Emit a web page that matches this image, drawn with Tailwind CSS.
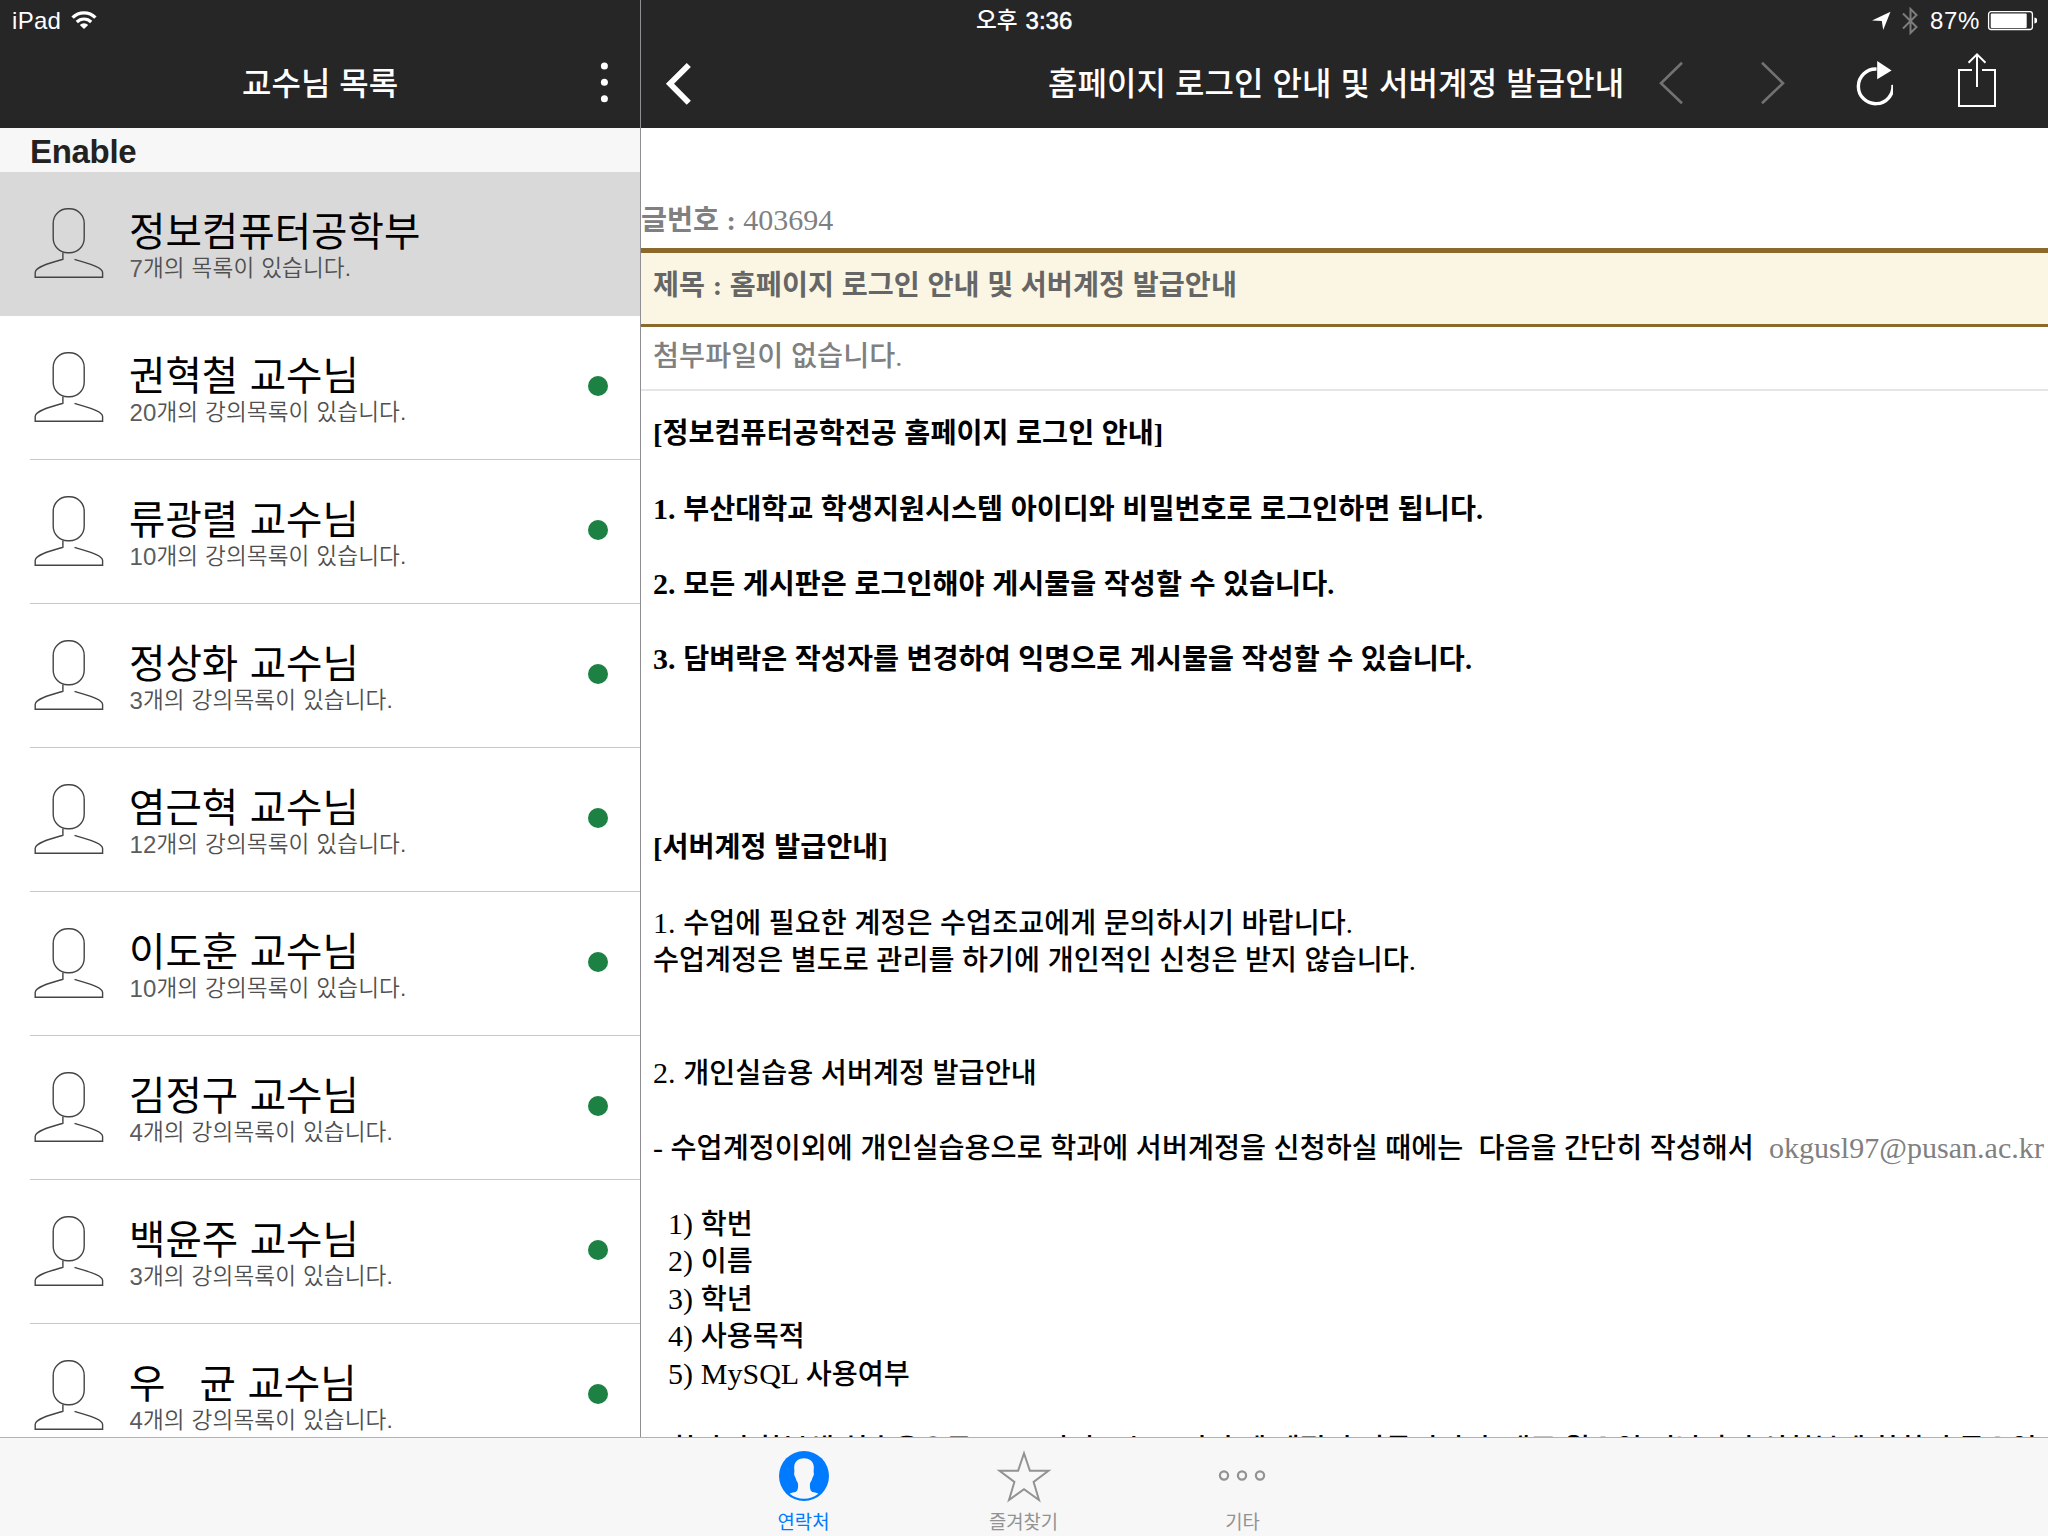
<!DOCTYPE html>
<html lang="ko">
<head>
<meta charset="utf-8">
<title>교수님 목록</title>
<script src="https://cdn.jsdelivr.net/npm/@tailwindcss/browser@4"></script>
</head>
<body class="bg-white">
<div class="flex h-[1536px] w-[2048px] flex-col overflow-hidden font-['Liberation_Sans','Noto_Sans_CJK_KR',sans-serif]">
  <div class="flex h-[1437px] overflow-hidden">

    <!-- Professor list -->
    <aside class="flex w-[640px] flex-none flex-col">
      <header class="h-32 flex-none bg-[#262626] text-white">
        <div class="flex h-10 items-start gap-[10px] pl-[12px] pt-[7px]">
          <span class="text-2xl leading-[27px] tracking-[0.3px]">iPad</span>
          <svg class="mt-[3px] h-[20px] w-[26px]" viewBox="0 0 26 20" fill="none" stroke="#fff">
            <path d="M1.6 7.6A16 16 0 0 1 24.4 7.6" stroke-width="3.4"/>
            <path d="M5.8 12A10.2 10.2 0 0 1 20.2 12" stroke-width="3.2"/>
            <path d="M13 19L8.8 14.9A6 6 0 0 1 17.2 14.9Z" fill="#fff" stroke="none"/>
          </svg>
        </div>
        <div class="flex h-[88px] items-start">
          <h1 class="ml-[242px] w-[349px] pt-6 text-[32px] leading-10 font-medium">교수님 목록</h1>
          <svg class="mt-[20px] h-11 w-7" viewBox="0 0 28 44" fill="#fff">
            <circle cx="13.4" cy="6" r="3.5"/><circle cx="13.4" cy="22.3" r="3.5"/><circle cx="13.4" cy="38.7" r="3.5"/>
          </svg>
        </div>
      </header>
      <h2 class="h-11 flex-none bg-[#f7f7f7] pl-[30px] pt-[5px] text-[33px] leading-[38px] font-bold tracking-[-0.3px] text-[#222]">Enable</h2>
      <ul id="list"></ul>
    </aside>

    <div class="w-px flex-none bg-[#8e8e93]"></div>

    <!-- Notice -->
    <main class="w-[1407px] flex-none">
      <header class="h-32 bg-[#262626] text-white">
        <div class="flex h-10 items-start pt-[7px]">
          <div class="flex w-[1230px] items-start pl-[335px] font-medium">
            <span class="text-[22.6px] leading-[27px]">오후</span><span class="pl-[8px] text-2xl leading-[27px] [-webkit-text-stroke:0.5px_#fff]">3:36</span>
          </div>
          <svg class="mt-[4px] h-5 w-5" viewBox="0 0 20 20" fill="#fff"><path d="M19.5 .8L1 9.6L10.8 9.9L12.2 19Z"/></svg>
          <svg class="ml-[10px] h-7 w-[18px]" viewBox="0 0 18 28" fill="none" stroke="#7d7d7d" stroke-width="2"><path d="M2 6.5L15.5 20L9.5 26V2L15.5 8L2 21.5"/></svg>
          <span class="ml-[11px] w-[55px] text-2xl leading-[27px] tracking-[0.7px]">87%</span>
          <svg class="mt-[3px] h-[22px] w-[52px]" viewBox="0 0 52 22"><rect x="3.6" y="1.7" width="43.8" height="17.8" rx="2.5" fill="none" stroke="#fff" stroke-width="1.3"/><rect x="5.7" y="3.4" width="36" height="14.6" rx="1" fill="#fff"/><path d="M49.4 7.5q3 .5 3 3t-3 3z" fill="#fff"/></svg>
        </div>
        <div class="flex h-[88px] items-start">
          <svg class="ml-[20px] mt-[20px] h-12 w-10" viewBox="0 0 40 48" fill="none" stroke="#fff" stroke-width="5.8"><path d="M27.8 5L9 23.7L27.8 42.8"/></svg>
          <div class="ml-[347px] w-[604px] pt-6 text-[32px] leading-10 font-medium tracking-[0.08px] whitespace-nowrap">홈페이지 로그인 안내 및 서버계정 발급안내</div>
          <svg class="mt-[18px] h-12 w-10" viewBox="0 0 40 48" fill="none" stroke="#727272" stroke-width="2.6"><path d="M30 4.8L9 25.2L30 45.2"/></svg>
          <svg class="ml-[60px] mt-[18px] h-12 w-10" viewBox="0 0 40 48" fill="none" stroke="#727272" stroke-width="2.6"><path d="M10 4.8L31 25.2L10 45.2"/></svg>
          <svg class="ml-[61px] mt-[18px] h-12 w-10" viewBox="0 0 40 48" fill="none"><path d="M24 10.3A17.3 17.3 0 1 0 40.3 26" stroke="#fff" stroke-width="3.4" transform="translate(-.4 .8)"/><path d="M24.2 3L38.6 12.4L24.2 21.2Z" fill="#fff"/></svg>
          <svg class="ml-[63px] mt-[12px] h-[58px] w-[42px]" viewBox="0 0 42 58" fill="none" stroke="#fff" stroke-width="2"><path d="M16 18H3V54H39V18H26M21 2.5V35M12.5 10.7L21 2.3L29.5 10.7"/></svg>
        </div>
      </header>

      <div class="font-['Liberation_Serif','Noto_Sans_CJK_KR',serif] text-[28.27px] leading-[37.63px] [word-spacing:0.4px]">
        <div class="flex h-[120px] items-start pt-[74px] whitespace-pre text-[#808080]"><b>글번호 : </b><span class="text-[30px] leading-[36.5px]">403694</span></div>
        <div class="h-[79px] border-t-[5px] border-b-[3px] border-[#8a692b] bg-[#faf6e3] pl-[12px] pt-[14px] font-bold tracking-[0.08px] text-[#666]">제목 : 홈페이지 로그인 안내 및 서버계정 발급안내</div>
        <div class="h-[64px] border-b-2 border-[#e5e5e5] pl-[12px] pt-[11px] font-medium tracking-[0.08px] text-[#808080]">첨부파일이 없습니다.</div>
        <article id="body" class="pt-[24.4px] pl-[12px] text-black"></article>
      </div>
    </main>
  </div>

  <!-- Tab bar -->
  <nav class="flex h-[99px] flex-none justify-center border-t border-[#b2b2b2] bg-[#f7f7f8] pr-[1px] text-[18.8px] leading-5 text-[#929292]">
    <a class="flex w-[220px] flex-col items-center gap-[10px] pt-[11px] text-[#007aff]">
      <svg class="h-[54px] w-[54px]" viewBox="0 0 54 54"><circle cx="27" cy="27" r="25" fill="#007aff"/><path d="M27 9.3C32 9.3 36.3 12 36.8 17.5C37 20 36.3 22 36.8 24C37.3 26.5 35.6 27.5 35.2 29.5C34.8 32 33 33 32.9 35.5C32.9 39 33 42.5 36.5 43.3C39 43.9 40.5 44 41.3 44.7A22.8 22.8 0 0 1 12.7 44.7C13.5 44 15 43.9 17.500 43.3C21 42.5 21.1 39 21.1 35.5C21 33 19.2 32 18.8 29.5C18.4 27.5 16.7 26.5 17.2 24C17.7 22 17 20 17.2 17.5C17.7 12 22 9.3 27 9.3Z" fill="#f7f7f8"/></svg>
      <span>연락처</span>
    </a>
    <a class="flex w-[220px] flex-col items-center gap-[10px] pt-[11px]">
      <svg class="h-[54px] w-[56px]" viewBox="0 0 56 54" fill="none" stroke="#929292" stroke-width="2"><path d="M28 4.3L33.9 21.7L52.5 21.7L37.6 33L43 51L28 40.2L13 51L18.4 33L3.5 21.7L22.1 21.7Z"/></svg>
      <span>즐겨찾기</span>
    </a>
    <a class="flex w-[220px] flex-col items-center gap-[10px] pt-[11px] pr-[2px]">
      <svg class="h-[54px] w-[54px]" viewBox="0 0 54 54" fill="none" stroke="#929292" stroke-width="2.2"><circle cx="8" cy="26.5" r="4.1"/><circle cx="26" cy="26.5" r="4.1"/><circle cx="44" cy="26.5" r="4.1"/></svg>
      <span>기타</span>
    </a>
  </nav>
</div>

<script>
  const people = [
    ['정보컴퓨터공학부', '7', '개의 목록이 있습니다.'],
    ['권혁철 교수님', '20', '개의 강의목록이 있습니다.'],
    ['류광렬 교수님', '10', '개의 강의목록이 있습니다.'],
    ['정상화 교수님', '3', '개의 강의목록이 있습니다.'],
    ['염근혁 교수님', '12', '개의 강의목록이 있습니다.'],
    ['이도훈 교수님', '10', '개의 강의목록이 있습니다.'],
    ['김정구 교수님', '4', '개의 강의목록이 있습니다.'],
    ['백윤주 교수님', '3', '개의 강의목록이 있습니다.'],
    ['우   균 교수님', '4', '개의 강의목록이 있습니다.'],
  ];
  document.getElementById('list').innerHTML = people.map(([name, n, rest], i) => `
    <li class="flex h-36 ${i === 0 ? 'bg-[#d9d9d9]' : 'bg-white'}">
      <div class="flex w-full items-start ${i === 0 ? 'pl-[30px]' : 'ml-[30px] border-b border-[#c8c7cc]'}">
        <svg class="mt-[34px] h-[74px] w-[76px] flex-none" viewBox="0 0 76 74" fill="none" stroke="#444" stroke-width="1.4">
          <rect x="23.2" y="2.7" width="31" height="44" rx="14.5"/>
          <path d="M32.9 46.5V53.3C20 57 5.2 61 5.2 66.5V71.3H72.6V66.5C72.6 61 57 57.5 44.5 53.3"/>
        </svg>
        <div class="ml-[23px] w-[449px] flex-none pt-[36.5px]">
          <div class="pb-px text-[39.6px] leading-[46.5px] whitespace-pre text-black [word-spacing:0.4px]">${name}</div>
          <div class="flex pl-[0.5px] text-[22.6px] leading-[26.6px] font-[350] tracking-[0.1px] text-[#505050] [word-spacing:0.5px]"><span class="text-2xl leading-[26px] text-[#5c5c5c]">${n}</span><span>${rest}</span></div>
        </div>
        ${i === 0 ? '' : '<div class="mt-[60px] ml-[10px] size-5 rounded-full bg-[#1c8142]"></div>'}
      </div>
    </li>`).join('');

  const t = s => `<span class="text-[30px] leading-none [word-spacing:0px]">${s}</span>`;
  const lines = [
    '<b>[정보컴퓨터공학전공 홈페이지 로그인 안내]</b>', '',
    `<b>${t('1. ')}부산대학교 학생지원시스템 아이디와 비밀번호로 로그인하면 됩니다.</b>`, '',
    `<b>${t('2. ')}모든 게시판은 로그인해야 게시물을 작성할 수 있습니다.</b>`, '',
    `<b>${t('3. ')}담벼락은 작성자를 변경하여 익명으로 게시물을 작성할 수 있습니다.</b>`, '', '', '', '',
    '<b>[서버계정 발급안내]</b>', '',
    `${t('1. ')}수업에 필요한 계정은 수업조교에게 문의하시기 바랍니다.`,
    '수업계정은 별도로 관리를 하기에 개인적인 신청은 받지 않습니다.', '', '',
    `${t('2. ')}개인실습용 서버계정 발급안내`, '',
    `${t('- ')}수업계정이외에 개인실습용으로 학과에 서버계정을 신청하실 때에는  다음을 간단히 작성해서  <span class="text-[30px] leading-none text-[#808080]">okgusl97@pusan.ac.kr</span>`, '',
    `${t('  1) ')}학번`, `${t('  2) ')}이름`, `${t('  3) ')}학년`, `${t('  4) ')}사용목적`, `${t('  5) MySQL ')}사용여부`, '',
    `${t('- ')}학과의 학부생 실습용으로 ${t('apus')} 서버 또는 ${t('s')} 서버 에 계정이 만들어지며, 매주 월요일 지난까지 신청분에 한하여 금요일 지난까지`,
  ];
  document.getElementById('body').innerHTML = lines.map(l => `<div class="h-[37.63px] font-medium tracking-[0.04px] whitespace-pre">${l}</div>`).join('');
</script>
</body>
</html>
